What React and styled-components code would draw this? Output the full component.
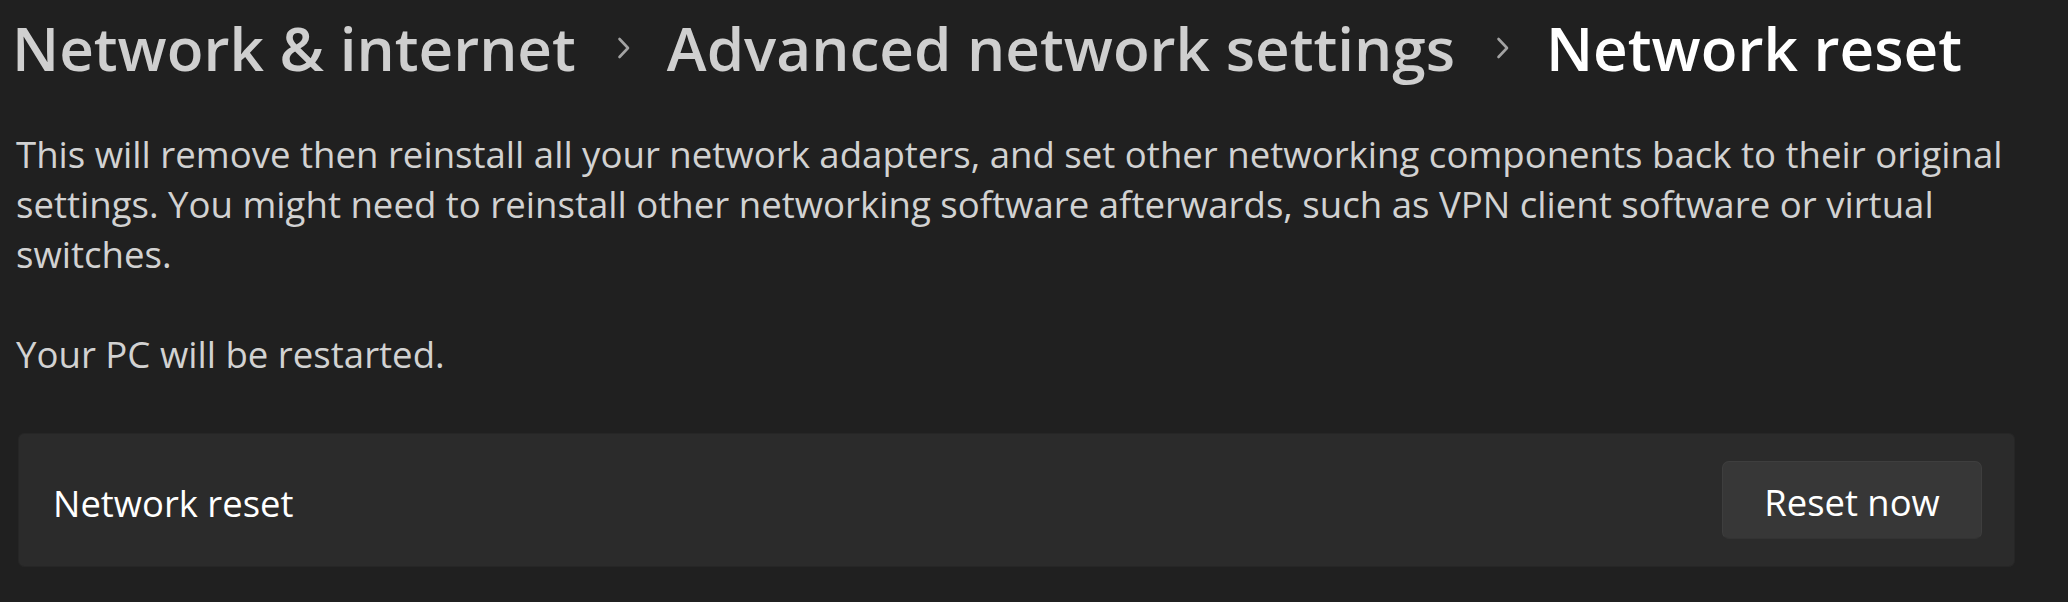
import React from 'react'
import styled, { createGlobalStyle } from 'styled-components'

const GlobalStyle = createGlobalStyle`
  html, body {
    margin: 0;
    padding: 0;
    background: #202020;
  }
  body {
    font-family: "Open Sans", "Noto Sans", "DejaVu Sans", sans-serif;
    color: #ffffff;
  }
`

const Page = styled.main`
  padding: 8px 50px 0 12px;
`

const Breadcrumb = styled.nav`
  display: flex;
  align-items: center;
  height: 80px;
`

const Crumb = styled.span`
  font-size: 60.2px;
  font-weight: 600;
  line-height: 80px;
  white-space: nowrap;
  color: ${(props) => (props.current ? '#ffffff' : '#cfcfcf')};
`

const Sep = styled.span`
  display: flex;
  align-items: center;
  margin: 0 36px 0 41px;
  color: #a3a3a3;
`

const Description = styled.p`
  margin: 41px 0 0 4px;
  font-size: 36.6px;
  line-height: 50px;
  color: #d2d2d2;
  white-space: pre-line;
`

const Card = styled.section`
  display: flex;
  align-items: center;
  justify-content: space-between;
  box-sizing: border-box;
  width: 1997px;
  height: 134px;
  margin: 54px 0 0 6px;
  padding: 0 32px 0 34px;
  background: #2b2b2b;
  border: 1px solid #262626;
  border-radius: 6px;
`

const Label = styled.span`
  font-size: 36.4px;
  line-height: 50px;
  padding-top: 6px;
  color: #ffffff;
`

const Button = styled.button`
  box-sizing: border-box;
  min-width: 260px;
  height: 78px;
  padding: 4px 40px 0;
  font-family: inherit;
  font-size: 36.4px;
  color: #ffffff;
  background: #373737;
  border: 1px solid #3e3e3e;
  border-bottom-color: #333333;
  border-radius: 7px;
  cursor: pointer;
`

function Chevron() {
  return (
    <Sep>
      <svg width="14" height="22" viewBox="0 0 14 22" fill="none">
        <path d="M2.5 2 L11 11 L2.5 20" stroke="currentColor" strokeWidth="2.6" strokeLinecap="round" strokeLinejoin="round" />
      </svg>
    </Sep>
  )
}

export default function App() {
  return (
    <>
      <GlobalStyle />
      <Page>
        <Breadcrumb>
          <Crumb>Network &amp; internet</Crumb>
          <Chevron />
          <Crumb>Advanced network settings</Crumb>
          <Chevron />
          <Crumb current>Network reset</Crumb>
        </Breadcrumb>

        <Description>
          {'This will remove then reinstall all your network adapters, and set other networking components back to their original settings. You might need to reinstall other networking software afterwards, such as VPN client software or virtual switches.\n\nYour PC will be restarted.'}
        </Description>

        <Card>
          <Label>Network reset</Label>
          <Button>Reset now</Button>
        </Card>
      </Page>
    </>
  )
}
